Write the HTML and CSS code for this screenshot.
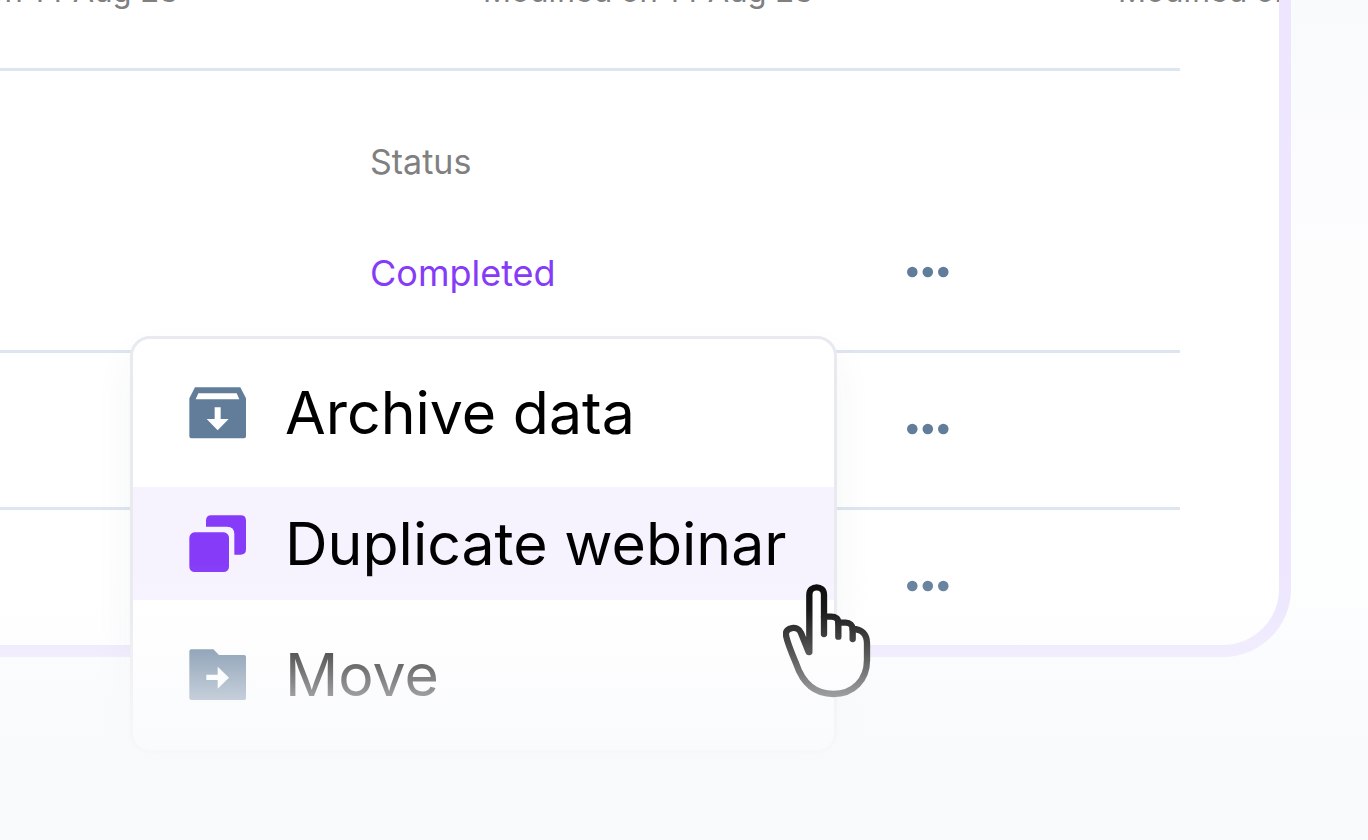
FILE: index.html
```
<!DOCTYPE html>
<html lang="en">
<head>
    <meta charset="UTF-8">
    <meta name="viewport" content="width=device-width, initial-scale=1.0">
    <title>Webinars</title>
    <link rel="stylesheet" href="styles.css">
</head>
<body>
    <main class="page">
        <section class="panel">
            <div class="dates">
                <span>Modified on 14 Aug 23</span>
                <span>Modified on 14 Aug 23</span>
                <span>Modified on 14 Aug 23</span>
            </div>

            <table class="webinars">
                <colgroup>
                    <col class="col-name">
                    <col class="col-status">
                    <col>
                </colgroup>
                <thead>
                    <tr>
                        <td></td>
                        <th scope="col">Status</th>
                        <td></td>
                    </tr>
                </thead>
                <tbody>
                    <tr>
                        <td></td>
                        <td class="status">Completed</td>
                        <td>
                            <button class="more-btn" type="button" aria-label="More options">
                                <svg width="42" height="12" viewBox="0 0 42 12"><circle cx="5.3" cy="6" r="5.3"/><circle cx="20.8" cy="6" r="5.3"/><circle cx="36.3" cy="6" r="5.3"/></svg>
                            </button>
                        </td>
                    </tr>
                    <tr>
                        <td></td>
                        <td></td>
                        <td>
                            <button class="more-btn" type="button" aria-label="More options">
                                <svg width="42" height="12" viewBox="0 0 42 12"><circle cx="5.3" cy="6" r="5.3"/><circle cx="20.8" cy="6" r="5.3"/><circle cx="36.3" cy="6" r="5.3"/></svg>
                            </button>
                        </td>
                    </tr>
                    <tr>
                        <td></td>
                        <td></td>
                        <td>
                            <button class="more-btn" type="button" aria-label="More options">
                                <svg width="42" height="12" viewBox="0 0 42 12"><circle cx="5.3" cy="6" r="5.3"/><circle cx="20.8" cy="6" r="5.3"/><circle cx="36.3" cy="6" r="5.3"/></svg>
                            </button>
                        </td>
                    </tr>
                </tbody>
            </table>
        </section>

        <div class="menu">
            <button class="menu-item" type="button">
                <svg class="menu-icon" viewBox="0 0 171 171">
                    <path fill-rule="evenodd" d="M18 10H154L171 43V157Q171 163 165 163H7Q1 163 1 157V43ZM28 28L20 46H151L143 28ZM77 70V105H53L86 139L119 105H95V70Z"/>
                </svg>
                Archive data
            </button>
            <button class="menu-item active" type="button">
                <svg class="menu-icon" viewBox="0 0 171 171">
                    <rect x="1" y="52" width="119" height="119" rx="16"/>
                    <path d="M51 35V17Q51 1 67 1H155Q171 1 171 17V103Q171 119 155 119H136V57Q136 35 114 35Z"/>
                </svg>
                Duplicate webinar
            </button>
            <button class="menu-item" type="button">
                <svg class="menu-icon" viewBox="0 0 171 171">
                    <path fill-rule="evenodd" d="M7 10H73L90 27H165Q171 27 171 33V156Q171 162 165 162H7Q1 162 1 156V16Q1 10 7 10ZM52 86V102H86V128L120 95L86 62V86Z"/>
                </svg>
                Move
            </button>
        </div>

        <svg class="cursor" width="88" height="114" viewBox="0 0 264 342">
            <path d="M77 204L54 147C46 124 5 128 9 154C11 166 25 205 39 238C58 295 95 330 151 330C211 330 252 288 252 228V178C252 151 236 135 209 135C209 124 201 116 188 116H166C166 104 158 98 145 98H123V32C123 3 79 3 79 32V204Z"/>
            <path d="M123 98V150M166 116V158M209 135V165"/>
        </svg>

        <div class="fade"></div>
    </main>
</body>
</html>
```
FILE: styles.css
```
* {
    box-sizing: border-box;
}

body {
    margin: 0;
    font-family: Inter, sans-serif;
    background: #f9fafc;
}

.page {
    position: relative;
    min-height: 100vh;
    overflow: hidden;
    background: linear-gradient(180deg, #f9fafc 0%, #fdfdfe 35%, #fdfefe 70%, #f9fafc 95%);
}

.panel {
    margin-right: 77px;
    padding-right: 99px;
    background: #fff;
    border: 12px solid #ede6fe;
    border-top: none;
    border-left: none;
    border-bottom-right-radius: 68px;
    overflow: hidden;
}

.dates {
    display: grid;
    grid-template-columns: repeat(3, 635px);
    height: 71px;
    border-bottom: 3px solid #dde5f0;
    color: #808080;
    font-size: 31px;
    line-height: 40px;
    white-space: nowrap;
}

.dates span {
    margin-top: -29px;
    margin-left: -152px;
}

/* Webinar list */
.webinars {
    width: 100%;
    table-layout: fixed;
    border-collapse: separate;
    border-spacing: 0;
    font-size: 36px;
    line-height: 50px;
}

.col-name {
    width: 370px;
}

.col-status {
    width: 537px;
}

.webinars th {
    height: 125px;
    padding: 66px 0 9px;
    color: #808080;
    font-size: 34px;
    font-weight: 400;
    text-align: left;
}

.webinars td {
    padding: 0;
}

.webinars tbody td {
    height: 157px;
    padding: 52px 0;
    border-bottom: 3px solid #dde5f0;
    vertical-align: top;
}

.webinars tbody tr:last-child td {
    height: 135px;
    padding-bottom: 33px;
    border-bottom: none;
}

.webinars .status {
    color: #853bf7;
}

.more-btn {
    display: flex;
    align-items: center;
    height: 48px;
    padding: 0;
    border: none;
    background: none;
    cursor: pointer;
}

.more-btn svg {
    fill: #627d9a;
}

/* Context menu */
.menu {
    position: absolute;
    top: 336px;
    left: 130px;
    width: 707px;
    display: flex;
    flex-direction: column;
    gap: 18px;
    padding: 17px 0 19px;
    background: #fff;
    border: 3px solid #e9eaef;
    border-radius: 20px;
    box-shadow: 0 20px 40px rgba(40, 50, 80, 0.05);
}

.menu-item {
    display: flex;
    align-items: center;
    gap: 39px;
    height: 113px;
    padding: 0 0 0 56px;
    border: none;
    background: none;
    color: #000;
    font-family: inherit;
    font-size: 59px;
    text-align: left;
    white-space: nowrap;
    cursor: pointer;
}

.menu-item.active {
    background: #f6f3ff;
}

.menu-icon {
    flex: none;
    width: 57px;
    height: 57px;
    fill: #627d9a;
}

.menu-item.active .menu-icon {
    fill: #853bf7;
}

.cursor {
    position: absolute;
    top: 584px;
    left: 783px;
    fill: #fff;
    stroke: #000;
    stroke-width: 19;
    stroke-linecap: round;
    stroke-linejoin: round;
}

/* Fades the lower part of the page into the background */
.fade {
    position: absolute;
    top: 560px;
    left: 0;
    right: 0;
    bottom: 0;
    background: linear-gradient(180deg,
        rgba(249, 250, 252, 0) 0,
        rgba(249, 250, 252, 0.1) 50px,
        rgba(249, 250, 252, 0.33) 90px,
        rgba(249, 250, 252, 0.66) 140px,
        rgba(249, 250, 252, 0.85) 190px,
        #f9fafc 260px);
    pointer-events: none;
}
```
